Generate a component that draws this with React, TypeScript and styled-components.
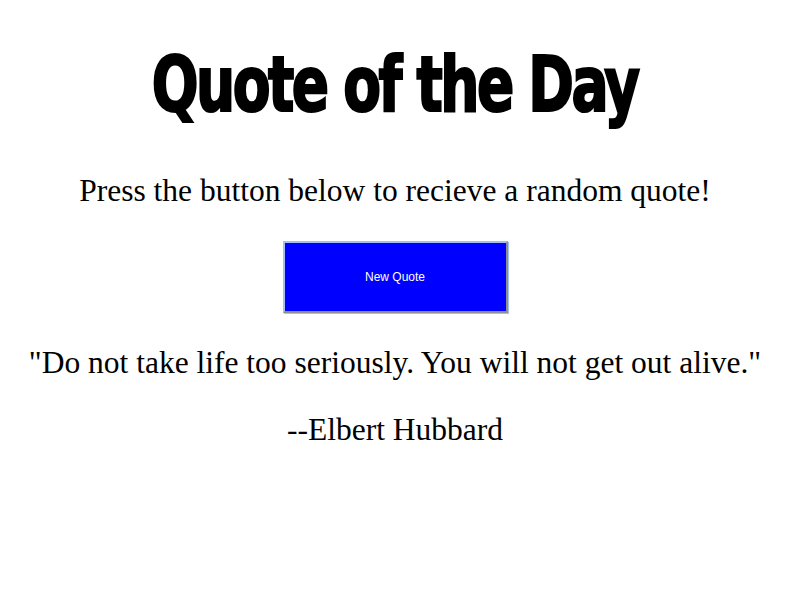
import React from "react";
import styled, { createGlobalStyle } from "styled-components";

const Global = createGlobalStyle`
  html, body { margin: 0; padding: 0; background: #ffffff; }
  body { font-family: "Liberation Serif", "Times New Roman", serif; color: #000; }
`;

const Page = styled.main`
  display: flex;
  flex-direction: column;
  align-items: center;
  text-align: center;
  padding: 41px 10px 0 0;
`;

const Title = styled.h1`
  margin: 0;
  font-family: Impact, "DejaVu Sans Condensed", "DejaVu Sans", sans-serif;
  font-weight: 700;
  font-stretch: condensed;
  font-size: 72px;
  line-height: 86px;
  letter-spacing: -3px;
  -webkit-text-stroke: 2px #000;
  transform: scale(0.85, 1.06);
  white-space: nowrap;
`;

const Lead = styled.p`
  margin: 45px 0 0;
  font-size: 31.5px;
  line-height: 37px;
`;

const QuoteButton = styled.button`
  margin-top: 32px;
  width: 225px;
  height: 72px;
  background: #0000ff;
  color: #ffffff;
  font-family: "Liberation Sans", Arial, sans-serif;
  font-size: 12px;
  border-style: solid;
  border-width: 2px;
  border-color: #a3c0f0 #8f8f8f #8f8f8f #a3c0f0;
  box-shadow: 1px 1px 0 #a3c0f0;
  padding: 0;
  cursor: pointer;
`;

const QuoteText = styled.p`
  margin: 32px 0 0;
  font-size: 31.5px;
  line-height: 35px;
`;

const Author = styled.p`
  margin: 32px 0 0;
  font-size: 31.5px;
  line-height: 35px;
`;

export default function App() {
  return (
    <>
      <Global />
      <Page>
        <Title>Quote of the Day</Title>
        <Lead>Press the button below to recieve a random quote!</Lead>
        <QuoteButton type="button">New Quote</QuoteButton>
        <QuoteText>"Do not take life too seriously. You will not get out alive."</QuoteText>
        <Author>--Elbert Hubbard</Author>
      </Page>
    </>
  );
}
